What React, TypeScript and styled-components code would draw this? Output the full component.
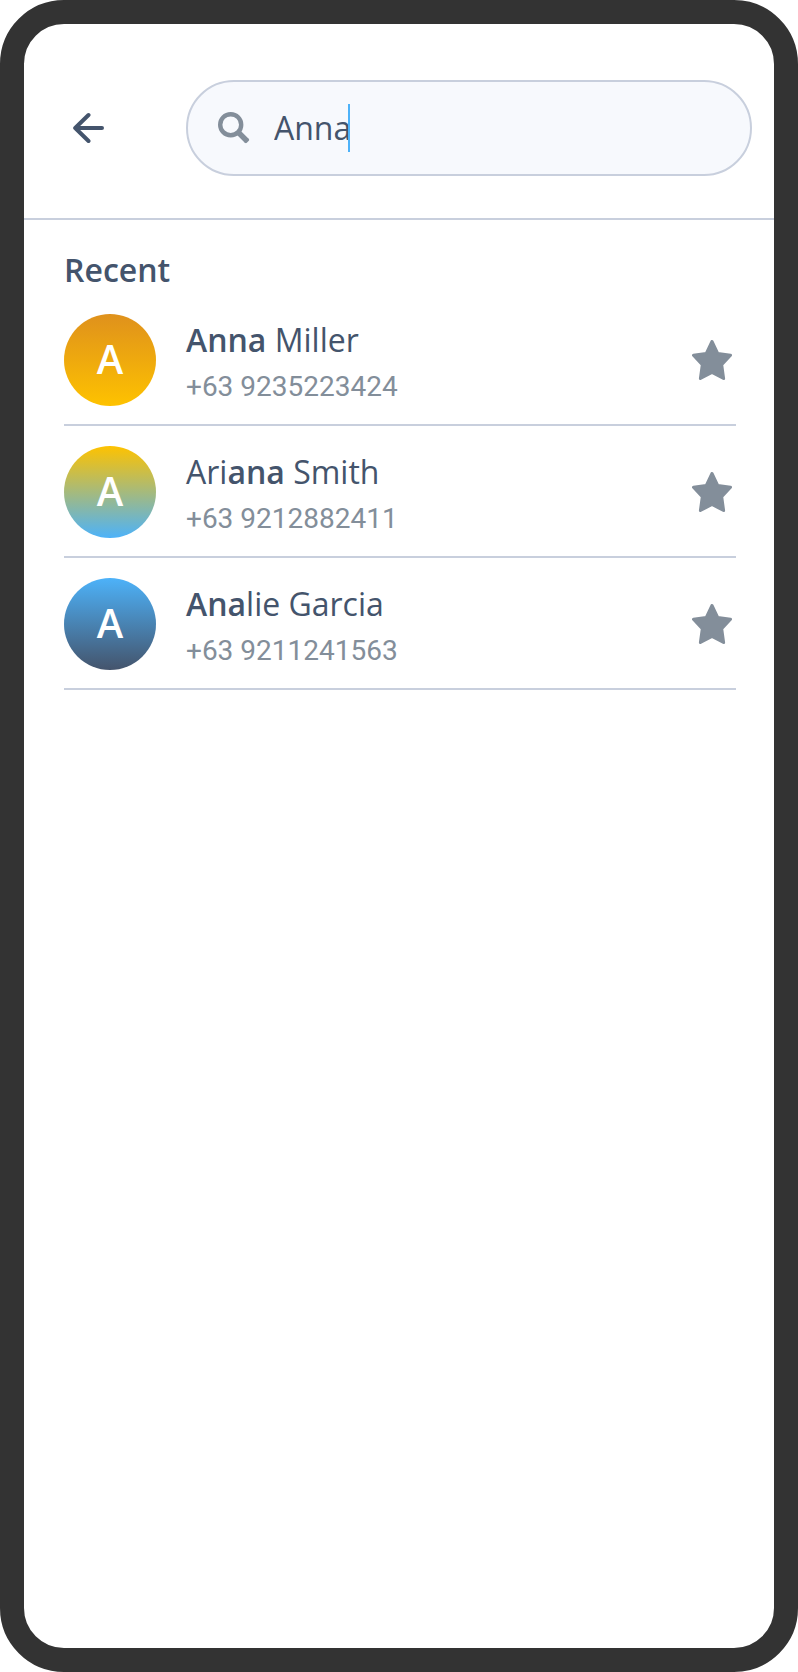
import React, { useState } from "react";
import styled, { createGlobalStyle } from "styled-components";

const color = {
  bezel: "#333333",
  ink: "#44546c",
  muted: "#838e9a",
  line: "#c8cfdd",
  field: "#f7f9fd",
  accent: "#4db2f9",
};

const GlobalStyle = createGlobalStyle`
  *, *::before, *::after { box-sizing: border-box; }
  body {
    margin: 0;
    background: #ffffff;
    color: ${color.ink};
    font-family: "Open Sans", "Noto Sans", sans-serif;
    font-size: 32px;
    line-height: 44px;
  }
`;

const Phone = styled.div`
  min-height: 100vh;
  display: flex;
  flex-direction: column;
  border: 24px solid ${color.bezel};
  border-radius: 64px;
  background: #ffffff;
`;

const Header = styled.header`
  display: flex;
  align-items: center;
  gap: 72px;
  padding: 56px 22px 42px 40px;
  border-bottom: 2px solid ${color.line};
`;

const IconButton = styled.button`
  display: flex;
  flex: none;
  padding: 0;
  border: 0;
  background: none;
  color: inherit;
  cursor: pointer;
`;

const BackButton = styled(IconButton)`
  width: 50px;
  height: 48px;
  align-items: center;
  justify-content: center;
`;

const SearchField = styled.label`
  flex: 1;
  min-width: 0;
  height: 96px;
  display: flex;
  align-items: center;
  padding: 0 30px;
  border: 2px solid ${color.line};
  border-radius: 48px;
  background: ${color.field};
  cursor: text;
`;

const SearchIcon = styled.svg`
  flex: none;
  margin-right: 24px;
  color: ${color.muted};
`;

const SearchInput = styled.input`
  field-sizing: content;
  min-width: 0;
  max-width: 100%;
  height: 48px;
  padding: 0 0 2px;
  border: 0;
  outline: 0;
  background: none;
  color: inherit;
  font: inherit;
  caret-color: transparent;
`;

const Caret = styled.span`
  flex: none;
  width: 2px;
  height: 48px;
  margin-left: -3px;
  background: ${color.accent};
`;

const Results = styled.main`
  padding: 28px 38px 40px 40px;
`;

const SectionTitle = styled.h1`
  margin: 0 0 2px;
  font-size: 32px;
  line-height: 44px;
  font-weight: 600;
`;

const ContactList = styled.ul`
  margin: 0;
  padding: 0;
  list-style: none;
`;

const ContactRow = styled.li`
  display: flex;
  align-items: center;
  padding: 20px 4px 18px 0;
  border-bottom: 2px solid ${color.line};
`;

const Avatar = styled.div<{ $from: string; $to: string }>`
  flex: none;
  width: 92px;
  height: 92px;
  margin-right: 30px;
  padding-bottom: 2px;
  display: flex;
  align-items: center;
  justify-content: center;
  border-radius: 50%;
  background: linear-gradient(${(p) => p.$from}, ${(p) => p.$to});
  color: #ffffff;
  font-size: 40px;
  font-weight: 600;
`;

const Details = styled.div`
  flex: 1;
  min-width: 0;
  padding-top: 4px;
`;

const Name = styled.div`
  margin-bottom: 6px;

  b {
    font-weight: 600;
  }
`;

const PhoneNumber = styled.div`
  color: ${color.muted};
  font-family: Roboto, sans-serif;
  font-size: 28px;
  line-height: 38px;
`;

const StarButton = styled(IconButton)`
  color: ${color.muted};
`;

type Part = { text: string; match?: boolean };
type Contact = { name: Part[]; phone: string; from: string; to: string };

const contacts: Contact[] = [
  {
    name: [{ text: "Anna", match: true }, { text: " Miller" }],
    phone: "+63 9235223424",
    from: "#df911c",
    to: "#fec200",
  },
  {
    name: [{ text: "Ari" }, { text: "ana", match: true }, { text: " Smith" }],
    phone: "+63 9212882411",
    from: "#fec200",
    to: "#4db2f9",
  },
  {
    name: [{ text: "Ana", match: true }, { text: "lie Garcia" }],
    phone: "+63 9211241563",
    from: "#4db2f9",
    to: "#44546c",
  },
];

const BackArrow = () => (
  <svg width="32" height="32" viewBox="0 0 32 32" fill="none" stroke="currentColor" strokeWidth="4" strokeLinecap="round" strokeLinejoin="round" aria-hidden="true">
    <path d="M29 16H2.2M15.5 3L2.2 16L15.5 29" />
  </svg>
);

const Magnifier = () => (
  <SearchIcon width="32" height="32" viewBox="0 0 32 32" fill="none" stroke="currentColor" aria-hidden="true">
    <circle cx="12.7" cy="12.7" r="10.5" strokeWidth="4.4" />
    <path d="M20 20L29 29" strokeWidth="5.4" />
    <path d="M29.9 27.9L27.9 29.9" strokeWidth="2.6" strokeLinecap="round" />
  </SearchIcon>
);

const Star = () => (
  <svg width="40" height="40" viewBox="0 0 40 40" fill="currentColor" stroke="currentColor" strokeWidth="3" strokeLinejoin="round" aria-hidden="true">
    <path d="M20 1.5L25.8 13.6L38.5 15.3L29.7 24.8L31.6 38.5L20 32.5L8.4 38.5L10.3 24.8L1.5 15.3L14.2 13.6Z" />
  </svg>
);

export default function App() {
  const [query, setQuery] = useState("Anna");

  return (
    <>
      <GlobalStyle />
      <Phone>
        <Header>
          <BackButton type="button" aria-label="Back">
            <BackArrow />
          </BackButton>
          <SearchField>
            <Magnifier />
            <SearchInput
              type="text"
              aria-label="Search contacts"
              value={query}
              onChange={(e) => setQuery(e.target.value)}
            />
            <Caret />
          </SearchField>
        </Header>
        <Results>
          <SectionTitle>Recent</SectionTitle>
          <ContactList>
            {contacts.map((c) => (
              <ContactRow key={c.phone}>
                <Avatar $from={c.from} $to={c.to}>A</Avatar>
                <Details>
                  <Name>
                    {c.name.map((part) =>
                      part.match ? <b key={part.text}>{part.text}</b> : <span key={part.text}>{part.text}</span>
                    )}
                  </Name>
                  <PhoneNumber>{c.phone}</PhoneNumber>
                </Details>
                <StarButton type="button" aria-label="Favorite">
                  <Star />
                </StarButton>
              </ContactRow>
            ))}
          </ContactList>
        </Results>
      </Phone>
    </>
  );
}
